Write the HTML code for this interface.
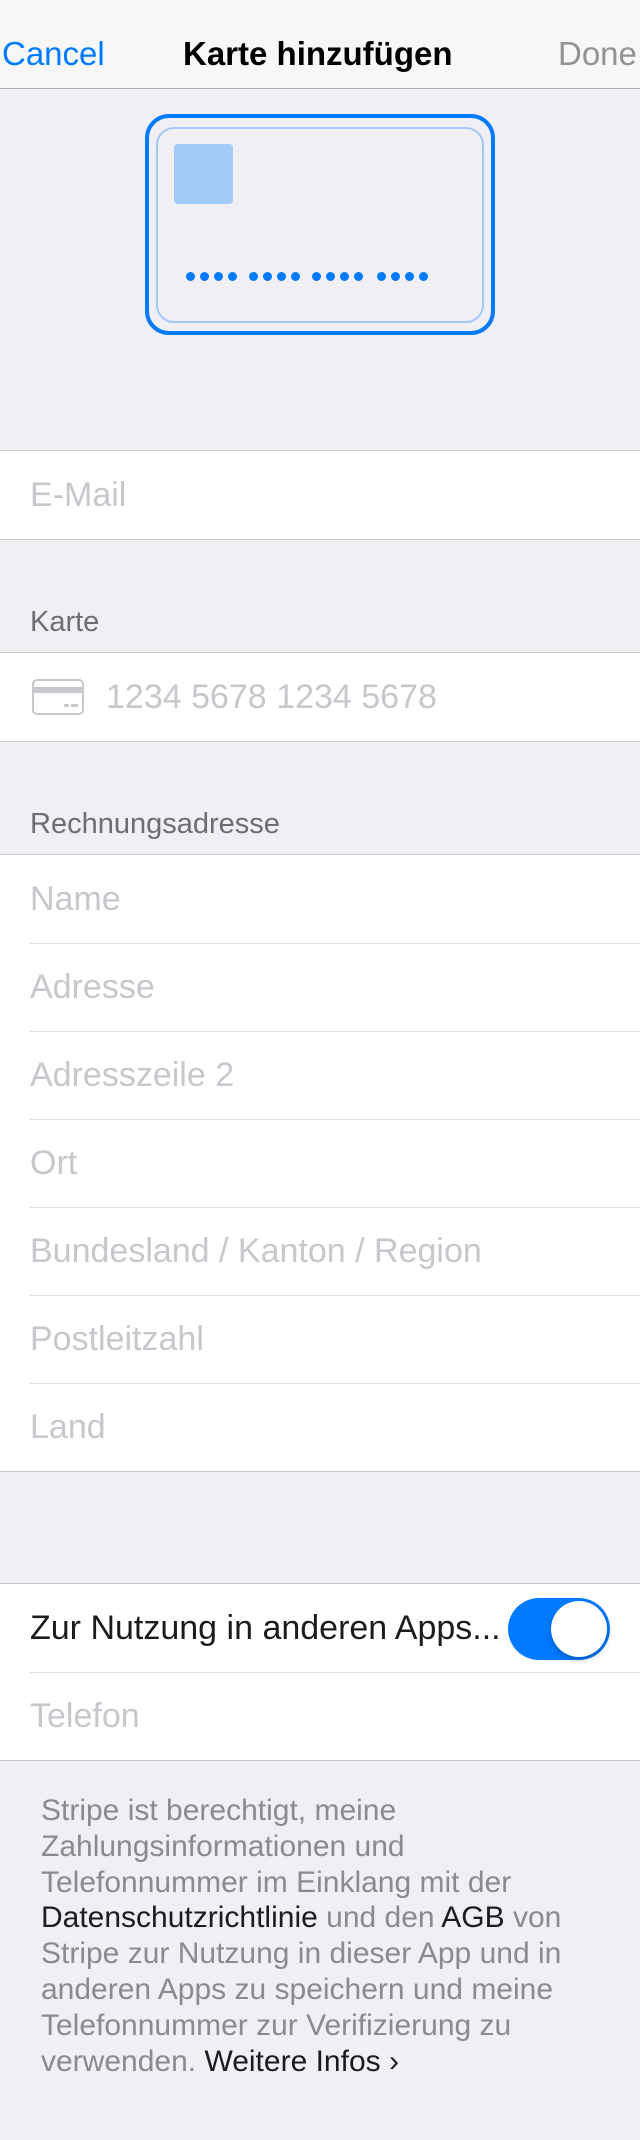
<!DOCTYPE html>
<html><head><meta charset="utf-8"><style>
*{margin:0;padding:0;box-sizing:border-box}
body{width:640px;height:2140px;background:#efeff4;font-family:"Liberation Sans",sans-serif;position:relative;overflow:hidden}
.a{position:absolute}
.nav{left:0;top:0;width:640px;height:89px;background:#f7f7f7;border-bottom:1px solid #b2b2b2}
.nav span{position:absolute;top:34px;font-size:33px;line-height:40px}
.sec{left:0;width:640px;background:#fff;border-top:1px solid #c8c7cc;border-bottom:1px solid #c8c7cc}
.row{height:88px;position:relative;font-size:34px;color:#c7c7cd;line-height:88px;padding-left:30px;white-space:nowrap}
.row+.row:before{content:"";position:absolute;left:30px;right:0;top:0;border-top:1px solid #e0e0e4}
.hdr{left:30px;font-size:29px;color:#6d6d72}
.dot{position:absolute;width:9px;height:9px;border-radius:50%;background:#007aff;top:272px}
.foot{left:41px;top:1793px;font-size:30px;line-height:35.8px;color:#8a8a8f;white-space:nowrap}
.foot b{font-weight:normal;color:#1c1c1e}
</style></head><body>
<div class="a nav">
<span style="left:2px;color:#007aff">Cancel</span>
<span style="left:183px;font-weight:bold;color:#000;font-size:33px">Karte hinzufügen</span>
<span style="left:558px;color:#929297">Done</span>
</div>
<div class="a" style="left:145px;top:114px;width:350px;height:221px;border:4px solid #007aff;border-radius:24px"></div>
<div class="a" style="left:156px;top:127px;width:328px;height:196px;border:2px solid #a0c9f8;border-radius:18px"></div>
<div class="a" style="left:174px;top:144px;width:59px;height:60px;background:#a2cbf9;border-radius:4px"></div>
<div class="a sec" style="top:450px"><div class="row">E-Mail</div></div>
<div class="a hdr" style="top:606px">Karte</div>
<div class="a sec" style="top:652px"><div class="row" style="padding-left:106px">1234 5678 1234 5678
<svg class="a" style="left:32px;top:26px" width="52" height="36" viewBox="0 0 52 36"><rect x="1" y="1" width="50" height="34" rx="4" fill="none" stroke="#c7c7cd" stroke-width="2"/><rect x="1" y="8" width="50" height="6" fill="#c7c7cd"/><rect x="32" y="25" width="5" height="3" fill="#c7c7cd"/><rect x="39" y="25" width="7" height="3" fill="#c7c7cd"/></svg></div></div>
<div class="a hdr" style="top:808px">Rechnungsadresse</div>
<div class="a sec" style="top:854px">
<div class="row">Name</div><div class="row">Adresse</div><div class="row">Adresszeile 2</div><div class="row">Ort</div><div class="row">Bundesland / Kanton / Region</div><div class="row">Postleitzahl</div><div class="row">Land</div>
</div>
<div class="a sec" style="top:1583px">
<div class="row" style="color:#1c1c1e">Zur Nutzung in anderen Apps...
<div class="a" style="left:508px;top:14px;width:102px;height:62px;border-radius:31px;background:#007aff"></div>
<div class="a" style="left:551px;top:17px;width:56px;height:56px;border-radius:50%;background:#fff;box-shadow:0 3px 6px rgba(0,0,0,.25)"></div>
</div>
<div class="row">Telefon</div>
</div>
<div class="a foot">Stripe ist berechtigt, meine<br>Zahlungsinformationen und<br>Telefonnummer im Einklang mit der<br><b>Datenschutzrichtlinie</b> und den <b>AGB</b> von<br>Stripe zur Nutzung in dieser App und in<br>anderen Apps zu speichern und meine<br>Telefonnummer zur Verifizierung zu<br>verwenden. <b>Weitere Infos ›</b></div>
<div class="dot" style="left:186px"></div><div class="dot" style="left:200px"></div><div class="dot" style="left:214px"></div><div class="dot" style="left:228px"></div>
<div class="dot" style="left:249px"></div><div class="dot" style="left:263px"></div><div class="dot" style="left:277px"></div><div class="dot" style="left:291px"></div>
<div class="dot" style="left:312px"></div><div class="dot" style="left:326px"></div><div class="dot" style="left:340px"></div><div class="dot" style="left:354px"></div>
<div class="dot" style="left:377px"></div><div class="dot" style="left:391px"></div><div class="dot" style="left:405px"></div><div class="dot" style="left:419px"></div>
</body></html>
